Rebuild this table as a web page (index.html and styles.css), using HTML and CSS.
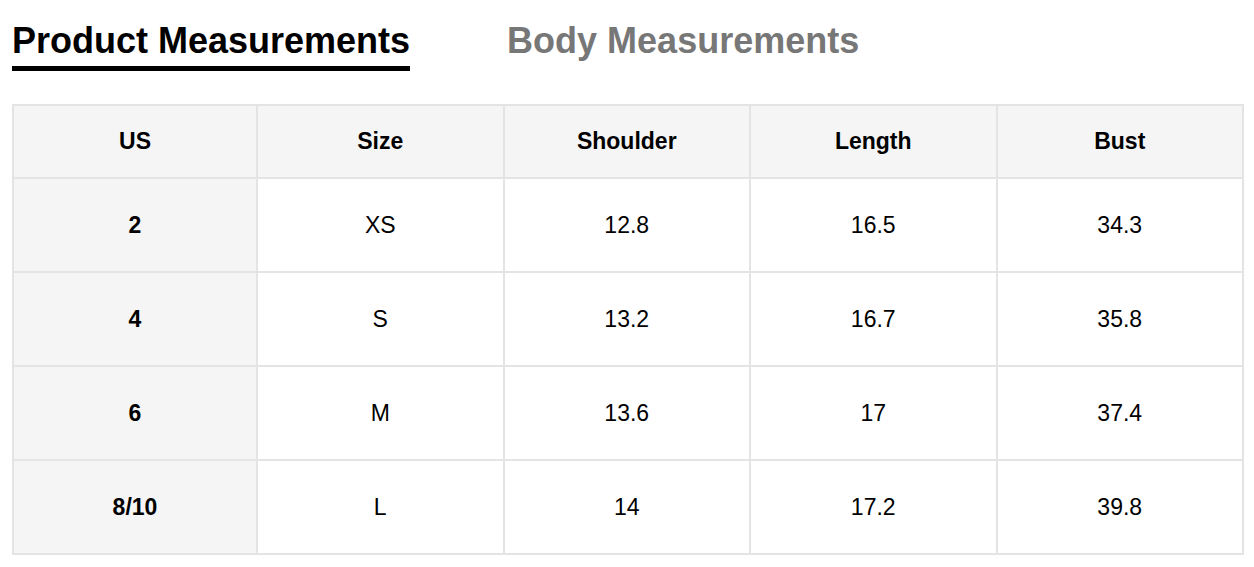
FILE: index.html
```html
<!DOCTYPE html>
<html lang="en">
<head>
<meta charset="utf-8">
<title>Size Chart</title>
<link rel="stylesheet" href="styles.css">
</head>
<body>
<div class="page">
  <div class="tabs">
    <div class="tab active">Product Measurements</div>
    <div class="tab">Body Measurements</div>
  </div>
  <table class="chart">
    <colgroup>
      <col class="col-first">
      <col><col><col><col>
    </colgroup>
    <thead>
      <tr><th>US</th><th>Size</th><th>Shoulder</th><th>Length</th><th>Bust</th></tr>
    </thead>
    <tbody>
      <tr><th>2</th><td>XS</td><td>12.8</td><td>16.5</td><td>34.3</td></tr>
      <tr><th>4</th><td>S</td><td>13.2</td><td>16.7</td><td>35.8</td></tr>
      <tr><th>6</th><td>M</td><td>13.6</td><td>17</td><td>37.4</td></tr>
      <tr><th>8/10</th><td>L</td><td>14</td><td>17.2</td><td>39.8</td></tr>
    </tbody>
  </table>
</div>
</body>
</html>
```
FILE: styles.css
```css
html, body {
  margin: 0;
  padding: 0;
  background: #ffffff;
}
body {
  font-family: "Liberation Sans", Arial, Helvetica, sans-serif;
  color: #000;
}
.page {
  padding: 23px 10px 0 12px;
}
.tabs {
  display: flex;
  gap: 97px;
  align-items: flex-start;
}
.tab {
  font-size: 36px;
  font-weight: bold;
  line-height: 36px;
  color: #777777;
  padding-bottom: 7px;
  border-bottom: 5px solid transparent;
}
.tab.active {
  color: #000;
  border-bottom-color: #000;
}
.chart {
  margin-top: 33px;
  width: 1232px;
  border-collapse: separate;
  border-spacing: 2px;
  background: #e4e4e4;
  table-layout: fixed;
  font-size: 23px;
}
.col-first {
  width: 242px;
}
.chart th, .chart td {
  padding: 0;
  text-align: center;
  vertical-align: middle;
  background: #fff;
}
.chart thead th {
  background: #f5f5f5;
  height: 71px;
  font-weight: bold;
}
.chart tbody td, .chart tbody th {
  height: 92px;
  font-weight: normal;
}
.chart tbody th {
  background: #f5f5f5;
  font-weight: bold;
}
```
